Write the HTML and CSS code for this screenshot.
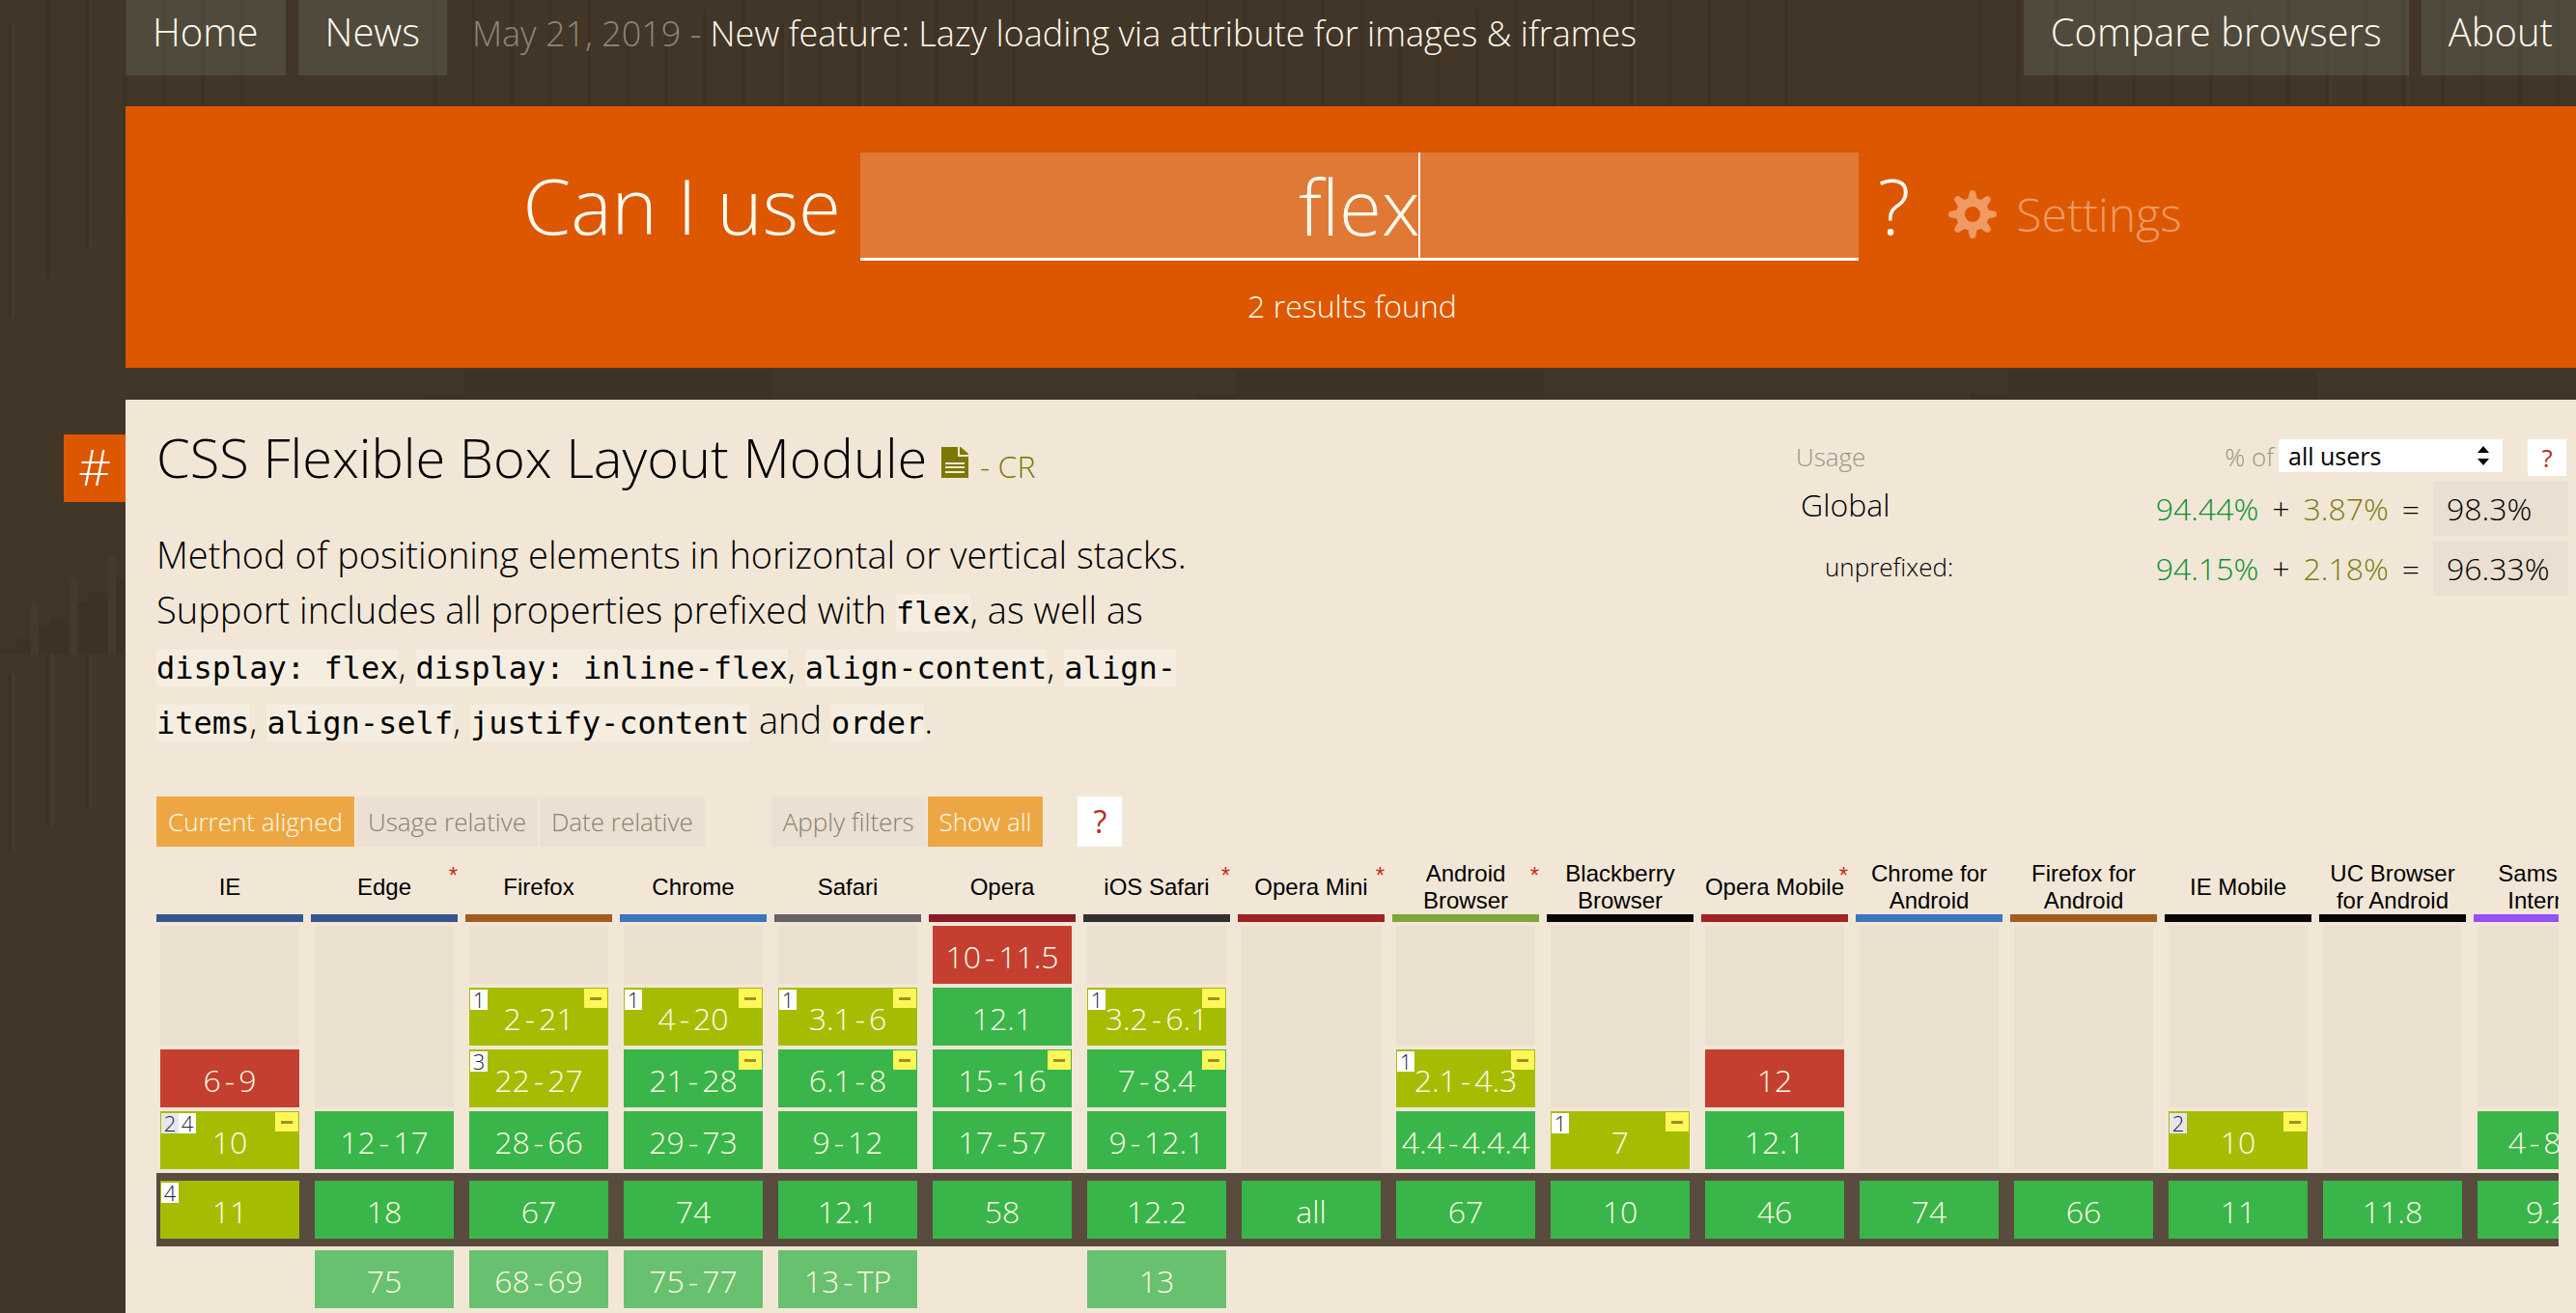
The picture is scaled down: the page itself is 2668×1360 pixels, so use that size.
FILE: index.html
```html
<!DOCTYPE html>
<html lang="en">
<head>
<meta charset="utf-8">
<title>Can I use... Support tables for HTML5, CSS3, etc</title>
<link rel="stylesheet" href="styles.css">
</head>
<body>
<div class="page">
  <header class="topbar">
    <nav class="nav">
      <a class="nav-link" href="#home">Home</a>
      <a class="nav-link" href="#news">News</a>
    </nav>
    <p class="headline"><span class="headline-date">May 21, 2019 -</span> <a href="#lazy-loading">New feature: Lazy loading via attribute for images &amp; iframes</a></p>
    <nav class="nav">
      <a class="nav-link" href="#compare">Compare browsers</a>
      <a class="nav-link" href="#about">About</a>
    </nav>
  </header>

  <section class="hero">
    <form class="search">
      <label for="q">Can I use</label>
      <div class="search-box">
        <input id="q" type="text" value="flex" autocomplete="off">
        <span class="caret"></span>
      </div>
      <span class="search-mark">?</span>
      <button type="button" class="settings">
        <svg viewBox="0 0 50 50" width="50" height="50" aria-hidden="true"><path fill-rule="evenodd" fill="currentColor" d="M25 0C27 0 28 1 28.600 3.500L29.500 8.500L33.500 10L38 7C40 5.700 41.300 5.700 42.700 7.300C44.300 8.700 44.300 10 43 12L40 16.500L41.500 20.500L46.500 21.400C49 22 50 23 50 25C50 27 49 28 46.500 28.600L41.500 29.500L40 33.500L43 38C44.300 40 44.300 41.300 42.700 42.700C41.300 44.300 40 44.300 38 43L33.500 40L29.500 41.500L28.600 46.500C28 49 27 50 25 50C23 50 22 49 21.400 46.500L20.500 41.500L16.500 40L12 43C10 44.300 8.700 44.300 7.300 42.700C5.700 41.300 5.700 40 7 38L10 33.500L8.500 29.500L3.500 28.600C1 28 0 27 0 25C0 23 1 22 3.500 21.400L8.500 20.500L10 16.500L7 12C5.700 10 5.700 8.700 7.300 7.300C8.700 5.700 10 5.700 12 7L16.500 10L20.500 8.500L21.400 3.500C22 1 23 0 25 0ZM25 17A8 8 0 1 0 25 33A8 8 0 1 0 25 17Z"/></svg>
        <span>Settings</span>
      </button>
    </form>
    <p class="results">2 results found</p>
  </section>

  <main class="feature">
    <a class="permalink" href="#flexbox">#</a>
    <div class="feature-top">
      <div class="intro">
        <h1 class="title">CSS Flexible Box Layout Module
          <a class="spec" href="#spec"><svg viewBox="0 0 28 32" width="28" height="32" aria-hidden="true"><path fill="currentColor" d="M0 0H17V10H28V32H0Z"/><path fill="currentColor" d="M19 0H20L28 7V8H19Z"/><path stroke="#f1e7d6" stroke-width="2" d="M4 17H24M4 21H24M4 26H24"/></svg><span>- CR</span></a>
        </h1>
        <p class="description">Method of positioning elements in horizontal or vertical stacks. Support includes all properties prefixed with <code>flex</code>, as well as <code>display: flex</code>, <code>display: inline-flex</code>, <code>align-content</code>, <code>align-items</code>, <code>align-self</code>, <code>justify-content</code> and <code>order</code>.</p>
      </div>
      <aside class="usage">
        <div class="usage-head">
          <span>Usage</span>
          <label class="usage-of" for="region">% of</label>
          <div class="select-wrap">
            <select id="region"><option>all users</option><option>tracked desktop</option><option>tracked mobile</option></select>
            <svg class="arrows" viewBox="0 0 14 20" width="14" height="20" aria-hidden="true"><path d="M7 0L13 7H1ZM7 20L1 13H13Z"/></svg>
          </div>
          <button type="button" class="help">?</button>
        </div>
        <div class="usage-row"><span class="usage-name">Global</span><span class="full">94.44%</span><span>+</span><span class="part">3.87%</span><span>=</span><span class="total">98.3%</span></div>
        <div class="usage-row"><span class="usage-name sub">unprefixed:</span><span class="full">94.15%</span><span>+</span><span class="part">2.18%</span><span>=</span><span class="total">96.33%</span></div>
      </aside>
    </div>

    <div class="modes">
      <button type="button" class="mode on">Current aligned</button>
      <button type="button" class="mode">Usage relative</button>
      <button type="button" class="mode">Date relative</button>
      <button type="button" class="mode filters">Apply filters</button>
      <button type="button" class="mode on">Show all</button>
      <button type="button" class="help modes-help">?</button>
    </div>

    <div class="support-wrap">
      <table class="support">
        <thead>
          <tr>
            <th class="ie">IE</th>
            <th class="ie">Edge<sup>*</sup></th>
            <th class="firefox">Firefox</th>
            <th class="chrome">Chrome</th>
            <th class="safari">Safari</th>
            <th class="opera">Opera</th>
            <th class="ios">iOS Safari<sup>*</sup></th>
            <th class="opera-m">Opera Mini<sup>*</sup></th>
            <th class="android">Android Browser<sup>*</sup></th>
            <th class="black">Blackberry Browser</th>
            <th class="opera-m">Opera Mobile<sup>*</sup></th>
            <th class="chrome">Chrome for Android</th>
            <th class="firefox">Firefox for Android</th>
            <th class="black">IE Mobile</th>
            <th class="black">UC Browser for Android</th>
            <th class="samsung">Samsung Internet</th>
          </tr>
        </thead>
        <tbody>
          <tr>
            <td class="none" rowspan="2"></td>
            <td class="none" rowspan="3"></td>
            <td class="none"></td>
            <td class="none"></td>
            <td class="none"></td>
            <td class="n">10<i>-</i>11.5</td>
            <td class="none"></td>
            <td class="none" rowspan="4"></td>
            <td class="none" rowspan="2"></td>
            <td class="none" rowspan="3"></td>
            <td class="none" rowspan="2"></td>
            <td class="none" rowspan="4"></td>
            <td class="none" rowspan="4"></td>
            <td class="none" rowspan="3"></td>
            <td class="none" rowspan="4"></td>
            <td class="none" rowspan="3"></td>
          </tr>
          <tr>
            <td class="a"><span class="notes"><b>1</b></span><span class="prefix"></span>2<i>-</i>21</td>
            <td class="a"><span class="notes"><b>1</b></span><span class="prefix"></span>4<i>-</i>20</td>
            <td class="a"><span class="notes"><b>1</b></span><span class="prefix"></span>3.1<i>-</i>6</td>
            <td class="y">12.1</td>
            <td class="a"><span class="notes"><b>1</b></span><span class="prefix"></span>3.2<i>-</i>6.1</td>
          </tr>
          <tr>
            <td class="n">6<i>-</i>9</td>
            <td class="a"><span class="notes"><b>3</b></span>22<i>-</i>27</td>
            <td class="y"><span class="prefix"></span>21<i>-</i>28</td>
            <td class="y"><span class="prefix"></span>6.1<i>-</i>8</td>
            <td class="y"><span class="prefix"></span>15<i>-</i>16</td>
            <td class="y"><span class="prefix"></span>7<i>-</i>8.4</td>
            <td class="a"><span class="notes"><b>1</b></span><span class="prefix"></span>2.1<i>-</i>4.3</td>
            <td class="n">12</td>
          </tr>
          <tr>
            <td class="a"><span class="notes"><b class="alt">2</b><b>4</b></span><span class="prefix"></span>10</td>
            <td class="y">12<i>-</i>17</td>
            <td class="y">28<i>-</i>66</td>
            <td class="y">29<i>-</i>73</td>
            <td class="y">9<i>-</i>12</td>
            <td class="y">17<i>-</i>57</td>
            <td class="y">9<i>-</i>12.1</td>
            <td class="y">4.4<i>-</i>4.4.4</td>
            <td class="a"><span class="notes"><b>1</b></span><span class="prefix"></span>7</td>
            <td class="y">12.1</td>
            <td class="a"><span class="notes"><b class="alt">2</b></span><span class="prefix"></span>10</td>
            <td class="y">4<i>-</i>8.2</td>
          </tr>
          <tr class="current">
            <td class="a"><span class="notes"><b>4</b></span>11</td>
            <td class="y">18</td>
            <td class="y">67</td>
            <td class="y">74</td>
            <td class="y">12.1</td>
            <td class="y">58</td>
            <td class="y">12.2</td>
            <td class="y">all</td>
            <td class="y">67</td>
            <td class="y">10</td>
            <td class="y">46</td>
            <td class="y">74</td>
            <td class="y">66</td>
            <td class="y">11</td>
            <td class="y">11.8</td>
            <td class="y">9.2</td>
          </tr>
          <tr class="future">
            <td></td>
            <td class="y">75</td>
            <td class="y">68<i>-</i>69</td>
            <td class="y">75<i>-</i>77</td>
            <td class="y">13<i>-</i>TP</td>
            <td></td>
            <td class="y">13</td>
            <td colspan="9"></td>
          </tr>
        </tbody>
      </table>
    </div>
  </main>
</div>
</body>
</html>
```
FILE: styles.css
```css
* { box-sizing: border-box; }

body {
  margin: 0;
  min-height: 100vh;
  overflow-x: hidden;
  font-family: "Open Sans", sans-serif;
  font-weight: 300;
  font-size: 32px;
  color: #000;
  background-color: #423628;
  background-image: url("data:image/svg+xml,%3Csvg xmlns='http://www.w3.org/2000/svg' width='800' height='1360'%3E%3Cg fill='%233e3224'%3E%3Cpath d='M0 672H16V662H32V648H40H52V640H72V630H80V624H92V614H112V600H160V576H200V552H240V528H280V504H320V480H360V456H400V432H440V408H480V384H800V677H0Z'/%3E%3Cpath d='M8 24h4v304h-4zM48 0h4v288h-4zM88 0h4v256h-4zM128 0h4v224h-4zM168 0h4v190h-4zM208 0h4v160h-4zM248 0h4v110h-4zM448 0h4v110h-4zM488 0h4v110h-4zM528 0h4v110h-4zM568 0h4v110h-4zM608 0h4v110h-4zM648 30h4v80h-4zM688 20h4v90h-4zM728 10h4v100h-4zM768 0h4v110h-4zM8 697h4v185h-4zM48 648h4v209h-4zM88 624h4v214h-4z'/%3E%3C/g%3E%3Cg fill='%23463a2c'%3E%3Cpath d='M12 24h4v304h-4zM92 0h3v256h-3zM12 697h4v185h-4zM52 677h4v180h-4zM92 677h4v161h-4zM32 624h8v53h-8zM72 600h8v77h-8zM112 576h8v101h-8z'/%3E%3C/g%3E%3C/svg%3E");
  background-repeat: repeat-x;
}

p, h1 { margin: 0; font-weight: 300; }

a { color: inherit; text-decoration: none; }

button, input, select {
  margin: 0;
  border: 0;
  border-radius: 0;
  font-family: inherit;
  font-weight: inherit;
}

.page { padding-left: 130px; }

/* Top bar */

.topbar {
  display: flex;
  align-items: baseline;
  height: 110px;
  margin-right: -4px;
  color: #fffaee;
}

.nav { display: flex; gap: 13px; }

.nav-link {
  padding: 6px 28px 18px;
  background: rgba(126, 136, 126, 0.24);
  font-size: 40px;
  line-height: 54px;
}

.headline {
  flex: 1;
  padding-left: 26px;
  font-size: 36px;
  white-space: nowrap;
}

.headline-date { color: #8f8678; }

/* Search */

.hero {
  display: flex;
  flex-direction: column;
  align-items: center;
  gap: 25px;
  height: 271px;
  padding: 48px 0 0 3px;
  background: #dc5700;
  color: #fffaee;
}

.search {
  display: flex;
  align-items: center;
  gap: 20px;
  width: 1718px;
  max-width: 100%;
  font-size: 80px;
  line-height: 112px;
  white-space: nowrap;
}

.search label, .search-mark { padding-bottom: 4px; line-height: 108px; }

.search-box { position: relative; flex: 1; }

.search-box input {
  display: block;
  width: 100%;
  height: 112px;
  padding: 0;
  border-bottom: 3px solid #fffaee;
  background: #df7935;
  color: inherit;
  font-size: 80px;
  text-align: center;
  outline: 0;
}

.caret {
  position: absolute;
  top: 0;
  left: calc(50% + 61px);
  width: 2px;
  height: 112px;
  background: #fff;
}

.settings {
  display: flex;
  align-items: center;
  gap: 20px;
  padding: 16px 0 0 20px;
  background: none;
  color: #ee9a62;
  font-size: 48px;
  line-height: 64px;
}

.results { line-height: 44px; }

/* Feature panel */

.feature {
  position: relative;
  margin-top: 33px;
  padding: 21px 8px 32px 32px;
  background: #f2e7d7;
}

.permalink {
  position: absolute;
  top: 36px;
  left: -64px;
  width: 64px;
  height: 70px;
  background: #dc5700;
  color: #fff;
  font-size: 52px;
  line-height: 66px;
  text-align: center;
}

.feature-top {
  display: flex;
  justify-content: space-between;
  align-items: flex-start;
}

.title { font-size: 56px; line-height: 76px; }

.spec {
  display: inline-flex;
  align-items: baseline;
  gap: 12px;
  color: #7b7900;
  font-size: 32px;
}

.description {
  max-width: 1120px;
  margin-top: 25px;
  font-size: 38px;
  line-height: 57px;
}

.description code {
  background: #f5eee0;
  font: 400 32px/1 "DejaVu Sans Mono", monospace;
}

/* Usage figures */

.usage { width: 800px; padding-top: 20px; }

.usage-head {
  display: flex;
  align-items: flex-start;
  height: 44px;
  padding-right: 2px;
  color: #9c9385;
  font-size: 26px;
  line-height: 36px;
}

.usage-of { margin-left: auto; padding-right: 5px; }

.select-wrap { position: relative; }

.select-wrap select {
  display: block;
  width: 232px;
  height: 34px;
  padding: 0 10px;
  appearance: none;
  background: #fff;
  color: #000;
  font-size: 25px;
  font-weight: 400;
}

.arrows {
  position: absolute;
  top: 7px;
  right: 13px;
  pointer-events: none;
}

.help {
  width: 40px;
  height: 38px;
  margin-left: 26px;
  padding: 0;
  background: #fff;
  color: #b62a1c;
  font-size: 26px;
  font-weight: 400;
  line-height: 36px;
}

.usage-row {
  display: flex;
  gap: 14px;
  margin-bottom: 6px;
  line-height: 56px;
}

.usage-name { flex: 1; padding-left: 5px; line-height: 48px; }

.usage-name.sub { padding-left: 30px; font-size: 26px; line-height: 52px; }

.full { color: #069030; }

.part { color: #7d7b0c; }

.total {
  width: 140px;
  padding-left: 14px;
  background: #eadfd0;
}

/* View modes */

.modes {
  display: flex;
  gap: 2px;
  margin-top: 51px;
}

.mode {
  height: 52px;
  padding: 0 12px;
  background: #ebe0d1;
  color: #898073;
  font-size: 26px;
}

.mode.on { background: #eca744; color: #fffbe8; }

.mode.filters { margin-left: 67px; }

.modes-help {
  width: 46px;
  height: 52px;
  margin-left: 34px;
  font-size: 32px;
}

/* Support table */

.support-wrap {
  margin: 10px 10px 0 0;
  overflow: hidden;
}

.support {
  width: 2560px;
  table-layout: fixed;
  border-collapse: separate;
  border-spacing: 0 4px;
}

.support th {
  position: relative;
  height: 64px;
  padding: 0 0 8px;
  border-right: 8px solid transparent;
  background: linear-gradient(currentColor, currentColor) bottom / 100% 8px no-repeat padding-box;
  font: 400 24px/28px "Liberation Sans", sans-serif;
  -webkit-text-fill-color: #000;
}

.support sup {
  position: absolute;
  top: 2px;
  right: 0;
  font-size: 24px;
  line-height: 28px;
  -webkit-text-fill-color: #c5301f;
}

.ie { color: #36558f; }
.firefox { color: #a35c20; }
.chrome { color: #3b76c0; }
.safari { color: #666163; }
.opera { color: #891d27; }
.ios { color: #342f33; }
.opera-m { color: #a02323; }
.android { color: #7fa638; }
.black { color: #0a0608; }
.samsung { color: #944ff5; }

.support td {
  position: relative;
  height: 60px;
  padding: 3px 0 0;
  border: 0 solid transparent;
  border-width: 0 12px 0 4px;
  background-clip: padding-box;
  color: #fffbe6;
  line-height: 44px;
  text-align: center;
  white-space: nowrap;
}

.support i { margin: 0 4px; font-style: normal; }

.support .none { background-color: #ebe0d0; }
.support .y { background-color: #39b54a; }
.support .a { background-color: #a6bc03; }
.support .n { background-color: #c43f2f; }

.current { background: #594c3e; }

.support .current td { height: 76px; border-top-width: 8px; border-bottom-width: 8px; }

.support .future .y { background-color: #68c16f; }

.notes {
  position: absolute;
  top: 2px;
  left: 1px;
  display: flex;
}

.notes b {
  width: 18px;
  background: #fff;
  color: #222244;
  font-size: 22px;
  font-weight: 300;
  line-height: 21px;
}

.notes .alt { background: #e6e6ec; }

.prefix {
  position: absolute;
  top: 1px;
  right: 1px;
  width: 24px;
  height: 20px;
  background: linear-gradient(#9c9224, #9c9224) center / 12px 3px no-repeat #fdf758;
}
```
